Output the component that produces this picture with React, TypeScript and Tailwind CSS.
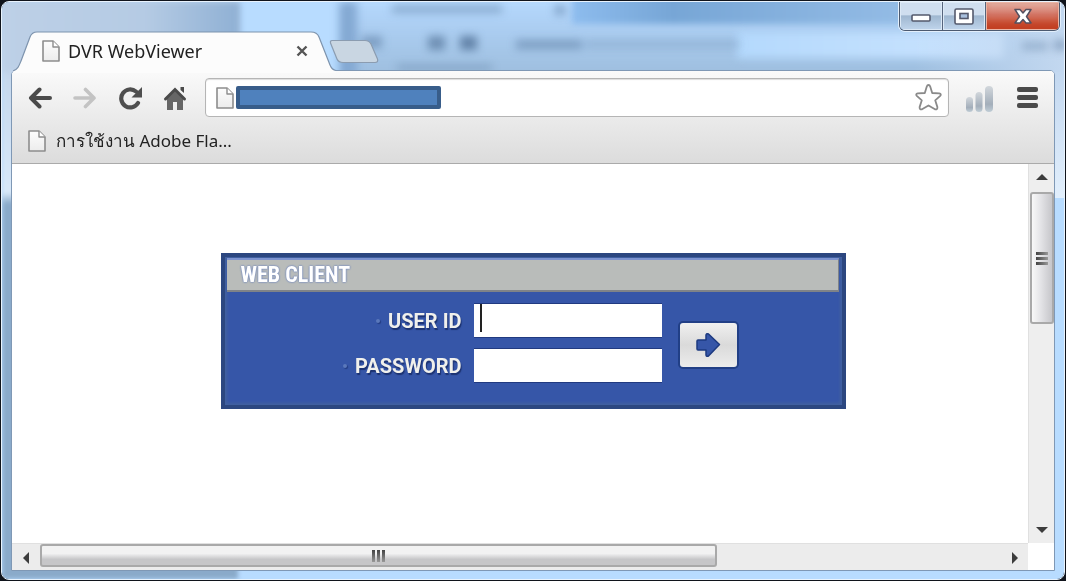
import { useState } from "react";
import type { FormEvent, ReactNode } from "react";

function PageIcon({ id }: { id: string }) {
  return (
    <svg width="18" height="22" viewBox="0 0 18 22" aria-hidden="true" className="shrink-0">
      <defs>
        <linearGradient id={id} x1="0" y1="0" x2="0" y2="1">
          <stop offset="0" stopColor="#fdfdfd" />
          <stop offset="1" stopColor="#ececec" />
        </linearGradient>
      </defs>
      <path d="M1 1h10l6 6v14H1z" fill={`url(#${id})`} stroke="#8d8d8d" strokeWidth="1.6" strokeLinejoin="round" />
      <path d="M11 1v6h6" fill="#fff" stroke="#8d8d8d" strokeWidth="1.4" strokeLinejoin="round" />
    </svg>
  );
}

function ToolButton({ label, children }: { label: string; children: ReactNode }) {
  return (
    <button type="button" aria-label={label} className="flex size-6 shrink-0 items-center justify-center">
      {children}
    </button>
  );
}

// shapes of the window behind, seen through the glass frame
function GlassBackdrop() {
  return (
    <div aria-hidden="true" className="absolute inset-0 -z-10 overflow-hidden bg-[#b8dcff]">
      <div className="absolute inset-y-0 left-0 w-[236px] bg-linear-to-b from-[#b9cde5] via-[#d9e9f9] via-33% to-[#8aaaca] to-35% blur-[2px]" />
      <div className="absolute top-0 left-0 h-[70px] w-[238px] bg-linear-to-r from-[#bdd0e7] via-[#b5cbe4] via-60% to-[#8fb0d4] blur-[3px]" />
      <div className="absolute top-0 right-0 left-[342px] h-[76px] bg-linear-to-b from-[#b5d8fd] via-[#a9cbee] via-45% to-[#9dbddd] blur-[2px]" />
      <div className="absolute top-0 left-[337px] h-[76px] w-[18px] bg-[#84a9d3] blur-[4px]" />
      <div className="absolute -top-2 right-[90px] left-[570px] h-[30px] bg-linear-to-r from-[#8dbcee] via-[#77a6d6] via-25% to-[#9cc2ea] blur-[3px]" />
      <div className="absolute top-[30px] right-[60px] left-[735px] h-[26px] bg-linear-to-r from-[#b4d9fd] to-[#cbe4fe] blur-[4px]" />
      <div className="absolute top-0 right-0 h-[76px] w-[150px] bg-linear-to-r from-transparent to-[#c3d8f0]" />
      <div className="absolute top-[70px] right-0 h-[126px] w-[14px] bg-linear-to-b from-[#c3d8f0] to-[#e2effc]" />
      <svg width="800" height="70" className="absolute top-0 left-[340px]">
        <g fill="#3f6086" className="blur-[4px]">
          <rect x="50" y="3" width="110" height="8" opacity=".35" />
          <rect x="213" y="3" width="10" height="10" opacity=".4" />
          <rect x="20" y="34" width="20" height="12" opacity=".4" />
          <rect x="86" y="34" width="17" height="14" opacity=".55" />
          <rect x="118" y="34" width="17" height="14" opacity=".65" />
          <rect x="174" y="38" width="66" height="9" opacity=".4" />
          <rect x="243" y="38" width="155" height="8" opacity=".18" />
          <rect x="55" y="63" width="95" height="5" opacity=".35" />
          <rect x="680" y="40" width="26" height="8" opacity=".3" />
          <rect x="712" y="38" width="12" height="10" opacity=".4" />
        </g>
      </svg>
    </div>
  );
}

function WindowControls() {
  return (
    <div className="mr-1 ml-auto flex h-[29px] self-start overflow-hidden rounded-b-md border border-t-0 border-[#4c5a70] shadow-[0_0_0_1px_#e3effc]">
      <button
        type="button"
        aria-label="Minimize"
        className="flex w-[43px] items-center justify-center border-r border-[#56647c] bg-linear-to-b from-[#cfdeef] from-45% via-[#9fb7d0] via-50% to-[#c0d5ec] pt-1 shadow-[inset_0_0_0_1px_#dce9f6]"
      >
        <svg width="20" height="8" aria-hidden="true">
          <rect x="1" y="1" width="18" height="6" rx="1" fill="#fff" stroke="#54596c" strokeWidth="1.6" />
        </svg>
      </button>
      <button
        type="button"
        aria-label="Maximize"
        className="flex w-[43px] items-center justify-center border-r border-[#56647c] bg-linear-to-b from-[#cfdeef] from-45% via-[#9fb7d0] via-50% to-[#c0d5ec] shadow-[inset_0_0_0_1px_#dce9f6]"
      >
        <svg width="20" height="17" aria-hidden="true">
          <rect x="1" y="1" width="18" height="15" rx="1.5" fill="#fff" stroke="#54596c" strokeWidth="1.6" />
          <rect x="6" y="5.5" width="8" height="5" fill="#a9c0dd" stroke="#54596c" strokeWidth="1.6" />
        </svg>
      </button>
      <button
        type="button"
        aria-label="Close"
        className="flex w-[73px] items-center justify-center bg-linear-to-b from-[#e0a597] from-10% via-[#d4796a] via-45% to-[#d9765a] shadow-[inset_0_0_0_1px_#eab5a5,inset_0_-14px_8px_-4px_#c23f22]"
      >
        <svg width="20" height="17" viewBox="0 0 20 17" aria-hidden="true">
          <path
            d="M2 1.500h5l3 3.500 3-3.500h5L13.500 8.500l4.500 6.500h-5l-3-3.500-3 3.500H2l4.500-6.500z"
            fill="#fff"
            stroke="#54505f"
            strokeWidth="1.5"
            strokeLinejoin="round"
          />
        </svg>
      </button>
    </div>
  );
}

function TabStrip() {
  return (
    <header className="relative z-10 flex h-[68px] items-end">
      <div className="relative ml-[11px] flex h-[39px] w-[323px] shrink-0 items-center">
        <svg width="323" height="42" viewBox="0 0 323 42" aria-hidden="true" className="absolute top-0 left-0 -z-10">
          <path d="M0 42V40C5 38 6 35 8 30L17 6Q19 1 24 1H298Q304 1 306 6L317 34Q319 39 323 39.500V42z" fill="#fcfcfc" />
          <path
            d="M0 40C5 38 6 35 8 30L17 6Q19 1 24 1H298Q304 1 306 6L317 34Q319 39 323 39.500"
            fill="none"
            stroke="#7d93ad"
            strokeWidth="1.2"
          />
        </svg>
        <span className="ml-[29px] flex">
          <PageIcon id="tab-page" />
        </span>
        <span className="ml-2 text-lg leading-6 whitespace-nowrap">DVR WebViewer</span>
        <button type="button" aria-label="Close tab" className="mr-[26px] ml-auto flex size-4 items-center justify-center">
          <svg width="12" height="12" aria-hidden="true">
            <path d="M1.500 1.500l9 9M10.500 1.500l-9 9" stroke="#555" strokeWidth="2.4" />
          </svg>
        </button>
      </div>
      <button type="button" aria-label="New tab" className="-ml-[7px] mb-[6px]">
        <svg width="50" height="25" viewBox="0 0 50 25" aria-hidden="true">
          <path
            d="M3 1.500H36Q40 1.500 42 5L48.500 20Q49.500 23.500 46 23.500H14Q9.500 23.500 8 20L1.500 4Q1 1.500 3 1.500z"
            fill="#c9d6e2"
            stroke="#8b9cb0"
            strokeWidth="1.2"
          />
        </svg>
      </button>
      <WindowControls />
    </header>
  );
}

function Toolbar() {
  return (
    <div className="flex h-[46px] items-end">
      <nav aria-label="Navigation" className="mr-[18px] ml-4 flex h-[39px] items-center gap-[21px]">
        <ToolButton label="Back">
          <svg width="24" height="22" viewBox="0 0 24 22" aria-hidden="true">
            <path d="M22 11H3M11.500 2.500L3 11l8.500 8.500" fill="none" stroke="#4a4a4a" strokeWidth="4" strokeLinecap="round" strokeLinejoin="round" />
          </svg>
        </ToolButton>
        <ToolButton label="Forward">
          <svg width="24" height="22" viewBox="0 0 24 22" aria-hidden="true">
            <path d="M2 11h19M12.500 2.500L21 11l-8.500 8.500" fill="none" stroke="#c3c3c3" strokeWidth="3.600" strokeLinecap="round" strokeLinejoin="round" />
          </svg>
        </ToolButton>
        <ToolButton label="Reload">
          <svg width="24" height="24" viewBox="0 0 24 24" aria-hidden="true">
            <path d="M20 17A9 9 0 1 1 18 5.500" fill="none" stroke="#4f4f4f" strokeWidth="4.200" strokeLinecap="round" />
            <path d="M24 1v10.500H13.500z" fill="#4f4f4f" />
          </svg>
        </ToolButton>
        <ToolButton label="Home">
          <svg width="24" height="24" viewBox="0 0 24 24" aria-hidden="true">
            <path d="M4 12L12 4.500l8 7.500V24h-6v-8h-4v8H4z" fill="#666" />
            <path d="M2.500 13L12 3.500l9.500 9.500" fill="none" stroke="#4a4a4a" strokeWidth="3" strokeLinecap="round" />
            <path d="M17.500 1h3.500v6l-3.500-3z" fill="#4a4a4a" />
          </svg>
        </ToolButton>
      </nav>
      <div className="flex h-[39px] flex-1 items-center rounded-[4px] border border-[#b5b5b5] bg-white pr-[5px] pl-[10px] shadow-[inset_0_1px_1px_#ddd]">
        <PageIcon id="address-page" />
        <input
          type="text"
          aria-label="Address"
          className="ml-[2px] h-[23px] w-[205px] rounded-xs border-4 border-[#385d8a] bg-[#4f81bd] outline-none"
        />
        <button type="button" aria-label="Bookmark this page" className="ml-auto">
          <svg width="29" height="29" viewBox="0 0 29 29" aria-hidden="true">
            <path
              d="M14.500 2Q15.700 2 16.200 3.500l2 6.500 7 .4Q27.800 11 26.200 12.800l-5 4.500 2.200 6.800Q23.600 27 21 26.300L14.500 22.500 8 26.300Q5.400 27 5.600 24.100l2.200-6.800-5-4.500Q1.200 11 3.800 10.400l7-.4 2-6.500Q13.300 2 14.500 2z"
              fill="#fff"
              stroke="#8a8a8a"
              strokeWidth="1.800"
              strokeLinejoin="round"
            />
          </svg>
        </button>
      </div>
      <div className="mr-4 ml-4 flex h-[39px] items-center gap-6">
        <button type="button" aria-label="Signal extension">
          <svg width="28" height="28" viewBox="0 0 28 28" aria-hidden="true">
            <defs>
              <linearGradient id="signal" x1="0" y1="0" x2="0" y2="1">
                <stop offset="0" stopColor="#d2d7dc" />
                <stop offset="0.700" stopColor="#a3aeba" />
                <stop offset="1" stopColor="#c0cdd6" />
              </linearGradient>
            </defs>
            <rect x="1" y="13" width="7" height="15" rx="3.500" fill="url(#signal)" />
            <rect x="10.500" y="8" width="7" height="20" rx="3.500" fill="url(#signal)" />
            <rect x="20" y="2" width="8" height="26" rx="4" fill="url(#signal)" />
          </svg>
        </button>
        <button type="button" aria-label="Menu">
          <svg width="21" height="21" viewBox="0 0 21 21" aria-hidden="true" fill="#4a4a4a">
            <rect y="0" width="21" height="5" rx="2" />
            <rect y="8" width="21" height="5" rx="2" />
            <rect y="16" width="21" height="5" rx="2" />
          </svg>
        </button>
      </div>
    </div>
  );
}

function ArrowButton({ label, points }: { label: string; points: string }) {
  return (
    <button type="button" aria-label={label} className="flex size-7 shrink-0 items-center justify-center">
      <svg width="12" height="12" aria-hidden="true">
        <polygon points={points} fill="#3c3c3c" />
      </svg>
    </button>
  );
}

function LoginForm() {
  const [userId, setUserId] = useState("");
  const [password, setPassword] = useState("");

  const handleSubmit = (e: FormEvent) => e.preventDefault();

  return (
    <form
      onSubmit={handleSubmit}
      className="h-[156px] w-full max-w-[625px] border-4 border-[#2c4780] bg-[#3656a8] shadow-[inset_0_0_3px_2px_#42619f]"
    >
      <h1 className="mt-px mr-[3px] ml-[2px] flex h-[34px] items-center border-t-2 border-r border-b-2 border-t-[#7d93cf] border-r-[#7f8388] border-b-[#7f8388] bg-[#b9bcba] pl-[14px] font-['Roboto_Condensed','Noto_Sans_CJK_SC',sans-serif] text-[22px] leading-6 font-bold text-white [text-shadow:0_0_2px_#6f86bd,0_0_2px_#6f86bd]">
        WEB CLIENT
      </h1>
      <div className="mt-3 flex items-center">
        <div className="grid grid-cols-[237px_188px] items-center gap-3 font-['Roboto',sans-serif] text-xl leading-6 font-bold text-[#f0f0ec]">
          <label htmlFor="user-id" className="flex items-center justify-end gap-2 [text-shadow:1px_2px_1px_#1c3271]">
            <span className="size-1 rounded-full bg-[#5a78bb] shadow-[1px_1px_1px_#213a80]" />
            USER ID
          </label>
          <div className="relative">
            <input
              id="user-id"
              type="text"
              value={userId}
              onChange={(e) => setUserId(e.target.value)}
              className="block h-[33px] w-full bg-white px-[7px] text-black shadow-[0_-1px_0_#213a80,0_1px_0_#213a80] outline-none"
            />
            {userId === "" && <span className="absolute top-0 left-[6px] h-7 w-[2px] bg-[#222]" />}
          </div>
          <label htmlFor="password" className="flex items-center justify-end gap-2 [text-shadow:1px_2px_1px_#1c3271]">
            <span className="size-1 rounded-full bg-[#5a78bb] shadow-[1px_1px_1px_#213a80]" />
            PASSWORD
          </label>
          <input
            id="password"
            type="password"
            value={password}
            onChange={(e) => setPassword(e.target.value)}
            className="block h-[33px] w-full bg-white px-[7px] text-black shadow-[0_-1px_0_#213a80,0_1px_0_#213a80] outline-none"
          />
        </div>
        <button
          type="submit"
          aria-label="Log in"
          className="mt-1 ml-4 flex h-12 w-[61px] items-center justify-center rounded-[5px] border-2 border-[#213f86] bg-linear-to-b from-[#f0f0f0] via-[#dadada] to-[#ececec]"
        >
          <svg width="26" height="26" viewBox="0 0 26 26" aria-hidden="true">
            <path
              d="M2 9Q2 8 3 8H11V3Q11.500 1 13.500 2L24.500 12.500 13.500 24Q11.500 25 11 23V18H3Q2 18 2 17z"
              fill="#3656a8"
              stroke="#1d3a80"
              strokeWidth="1.500"
              strokeLinejoin="round"
            />
          </svg>
        </button>
      </div>
    </form>
  );
}

export default function App() {
  return (
    <div className="flex min-h-screen bg-[#10141c] p-px font-['Noto_Sans',sans-serif] text-[#222]">
      <div className="relative isolate flex min-w-0 flex-1 flex-col overflow-hidden rounded-lg border border-[#e9f3fd]">
        <GlassBackdrop />
        <TabStrip />

        <div className="mx-[9px] mb-2 flex flex-1 flex-col rounded-t-[5px] border border-[#7f98b5] bg-white">
          <div className="rounded-t-[4px] border-b border-[#aaa] bg-linear-to-b from-[#fafafa] to-[#dcdcdc]">
            <Toolbar />
            <div className="flex h-[46px] items-center pt-[2px] pl-4">
              <a href="#" className="flex items-center gap-[10px] text-[17px] leading-6 whitespace-nowrap">
                <PageIcon id="bookmark-page" />
                การใช้งาน Adobe Fla...
              </a>
            </div>
          </div>

          <div className="flex flex-1">
            <main className="flex flex-1 items-start justify-center pt-[89px] pl-[26px]">
              <LoginForm />
            </main>
            <div className="flex w-[26px] flex-col items-center border-l border-[#e0e0e0] bg-[#eeeeee]">
              <ArrowButton label="Scroll up" points="0,8 6,2 12,8" />
              <div className="flex h-[132px] w-6 flex-col items-center justify-center gap-[2px] rounded-[3px] border-2 border-[#a9a9a9] bg-linear-to-r from-[#f8f8f8] via-[#e3e3e6] via-45% to-[#c6c6ca]">
                <span className="h-[3px] w-3 bg-linear-to-r from-[#444] to-[#999]" />
                <span className="h-[3px] w-3 bg-linear-to-r from-[#444] to-[#999]" />
                <span className="h-[3px] w-3 bg-linear-to-r from-[#444] to-[#999]" />
              </div>
              <div className="flex-1" />
              <ArrowButton label="Scroll down" points="0,4 12,4 6,10" />
            </div>
          </div>

          <div className="flex h-[27px] pr-[26px]">
            <div className="flex flex-1 items-start border-t border-[#e0e0e0] bg-[#ececec]">
              <ArrowButton label="Scroll left" points="9,0 3,6 9,12" />
              <div className="flex h-[23px] w-2/3 items-center justify-center gap-[2px] rounded-[3px] border-2 border-[#a9a9a9] bg-linear-to-b from-[#f2f2f2] from-40% to-[#c6c6c8] to-70%">
                <span className="h-3 w-[3px] bg-linear-to-b from-[#444] to-[#999]" />
                <span className="h-3 w-[3px] bg-linear-to-b from-[#444] to-[#999]" />
                <span className="h-3 w-[3px] bg-linear-to-b from-[#444] to-[#999]" />
              </div>
              <div className="flex-1" />
              <ArrowButton label="Scroll right" points="4,0 10,6 4,12" />
            </div>
          </div>
        </div>
      </div>
    </div>
  );
}
